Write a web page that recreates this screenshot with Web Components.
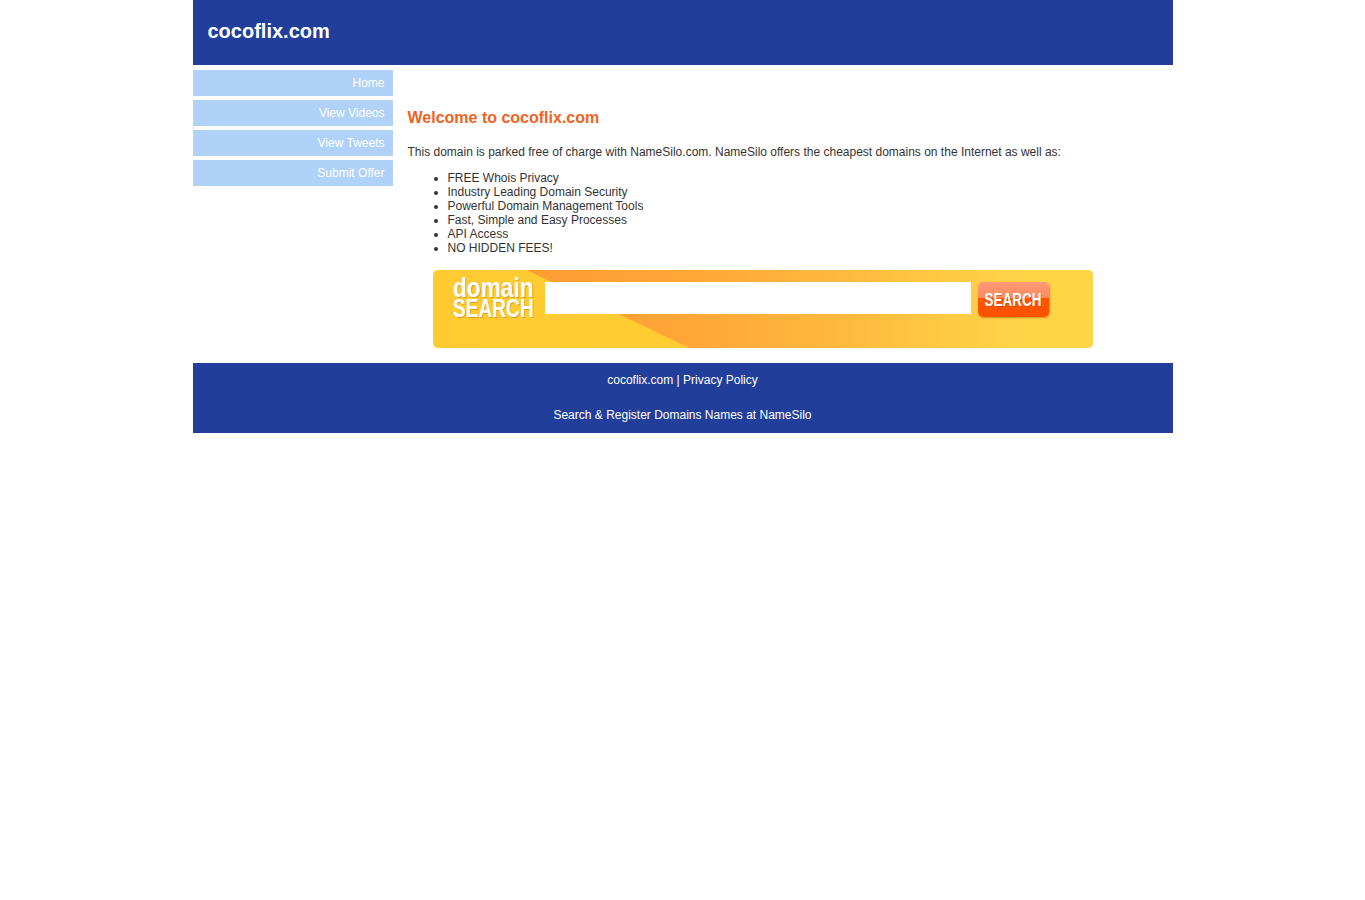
<!DOCTYPE html>
<html>
<head>
<meta charset="utf-8">
<title>cocoflix.com</title>
<style>
  body { margin: 0; background: #fff; font-family: "Liberation Sans", Arial, sans-serif; font-size: 12px; color: #333; }
</style>
</head>
<body>
<page-shell>
  <site-header slot="header">cocoflix.com</site-header>
  <side-nav slot="nav">
    <nav-item>Home</nav-item>
    <nav-item>View Videos</nav-item>
    <nav-item>View Tweets</nav-item>
    <nav-item>Submit Offer</nav-item>
  </side-nav>
  <welcome-panel slot="main" domain="cocoflix.com">
    <li>FREE Whois Privacy</li>
    <li>Industry Leading Domain Security</li>
    <li>Powerful Domain Management Tools</li>
    <li>Fast, Simple and Easy Processes</li>
    <li>API Access</li>
    <li>NO HIDDEN FEES!</li>
  </welcome-panel>
  <site-footer slot="footer"></site-footer>
</page-shell>

<script>
function shadow(el, html) {
  el.attachShadow({ mode: 'open' })
  const template = document.createElement('template')
  template.innerHTML = html
  el.shadowRoot.appendChild(template.content.cloneNode(true))
}

class PageShell extends HTMLElement {
  constructor() {
    super()
    shadow(this, `<style>
      :host { display: block; width: 980px; margin: 0 auto; }
      .cols { display: flex; }
      .nav { display: block; width: 200px; flex: none; }
      .main { display: block; flex: 1; min-width: 0; }
      </style>
      <slot name="header"></slot>
      <div class="cols">
        <div class="nav"><slot name="nav"></slot></div>
        <div class="main"><slot name="main"></slot></div>
      </div>
      <slot name="footer"></slot>`)
  }
}
customElements.define('page-shell', PageShell)

class SiteHeader extends HTMLElement {
  constructor() {
    super()
    shadow(this, `<style>
      :host { display: block; height: 65px; box-sizing: border-box; padding: 20px 0 0 15px; background: #213f9a; color: #fff; font: bold 20px/23px "Liberation Sans", Arial, sans-serif; }
      </style><slot></slot>`)
  }
}
customElements.define('site-header', SiteHeader)

class SideNav extends HTMLElement {
  constructor() {
    super()
    shadow(this, `<style>
      :host { display: flex; flex-direction: column; gap: 4px; padding-top: 5px; }
      </style><slot></slot>`)
  }
}
customElements.define('side-nav', SideNav)

class NavItem extends HTMLElement {
  constructor() {
    super()
    shadow(this, `<style>
      :host { display: block; height: 26px; padding-right: 8px; background: #b0d2f9; color: #fff; font-size: 12px; line-height: 26px; text-align: right; }
      </style><slot></slot>`)
  }
}
customElements.define('nav-item', NavItem)

class WelcomePanel extends HTMLElement {
  constructor() {
    super()
    const domain = this.getAttribute('domain')
    shadow(this, `<style>
      :host { display: block; padding: 44px 0 15px 15px; font-size: 12px; line-height: 14px; color: #333; }
      h1 { margin: 0 0 18px; font-size: 16px; line-height: 18px; font-weight: bold; color: #f26122; }
      p { margin: 0 0 12px; }
      ul { margin: 0 0 15px; padding-left: 40px; }
      ::slotted(li) { line-height: 14px; }
      domain-search { margin-left: 25px; }
      </style>
      <h1>Welcome to ${domain}</h1>
      <p>This domain is parked free of charge with NameSilo.com. NameSilo offers the cheapest domains on the Internet as well as:</p>
      <ul><slot></slot></ul>
      <domain-search></domain-search>`)
  }
}
customElements.define('welcome-panel', WelcomePanel)

class DomainSearch extends HTMLElement {
  constructor() {
    super()
    shadow(this, `<style>
      :host { display: flex; position: relative; width: 660px; height: 78px; box-sizing: border-box; padding: 12px 0 0 20px; border-radius: 5px; overflow: hidden; background: linear-gradient(90deg, #ffcb31 0%, #ffcc33 60%, #ffd548 100%); }
      :host::before { content: ""; position: absolute; inset: 0; clip-path: polygon(94px 0, 100% 0, 100% 100%, 257px 100%); background: linear-gradient(90deg, #ff9c33 90px, #ffa637 250px, #ffb83d 400px, #ffd548 590px); }
      .logo { position: relative; width: 92px; flex: none; margin-top: -6px; color: #fff; font-weight: bold; text-shadow: 1px 1px 0 rgba(190,120,20,.55); }
      .logo span { display: block; transform-origin: 0 0; white-space: nowrap; }
      .l1 { font-size: 27px; line-height: 24px; transform: scaleX(.84); }
      .l2 { font-size: 26px; line-height: 16px; transform: scaleX(.735); }
      input { position: relative; width: 426px; height: 32px; box-sizing: border-box; padding: 0; border: 0; background: #fff; flex: none; }
      button { position: relative; width: 71px; height: 35px; margin-left: 7px; padding: 0; border: 0; border-radius: 5px; flex: none; overflow: hidden; background: linear-gradient(180deg, #ff9b78 0%, #ff8a5c 46%, #ff5500 47%, #ff5200 100%); box-shadow: 1px 1px 2px rgba(170,90,10,.55); color: #fff; font: bold 19px/35px "Liberation Sans", Arial, sans-serif; }
      button span { display: block; width: 82px; margin-left: -5.5px; text-align: center; transform: scaleX(.71); text-shadow: 1px 1px 0 rgba(170,60,0,.45); }
      </style>
      <div class="logo"><span class="l1">domain</span><span class="l2">SEARCH</span></div>
      <input type="text" aria-label="Domain search">
      <button type="button"><span>SEARCH</span></button>`)
  }
}
customElements.define('domain-search', DomainSearch)

class SiteFooter extends HTMLElement {
  constructor() {
    super()
    shadow(this, `<style>
      :host { display: block; height: 70px; box-sizing: border-box; padding-top: 10px; background: #213f9a; color: #fff; font-size: 12px; line-height: 14px; text-align: center; }
      p { margin: 0 0 21px; }
      </style>
      <p>cocoflix.com | Privacy Policy</p>
      <p>Search &amp; Register Domains Names at NameSilo</p>`)
  }
}
customElements.define('site-footer', SiteFooter)
</script>
</body>
</html>
